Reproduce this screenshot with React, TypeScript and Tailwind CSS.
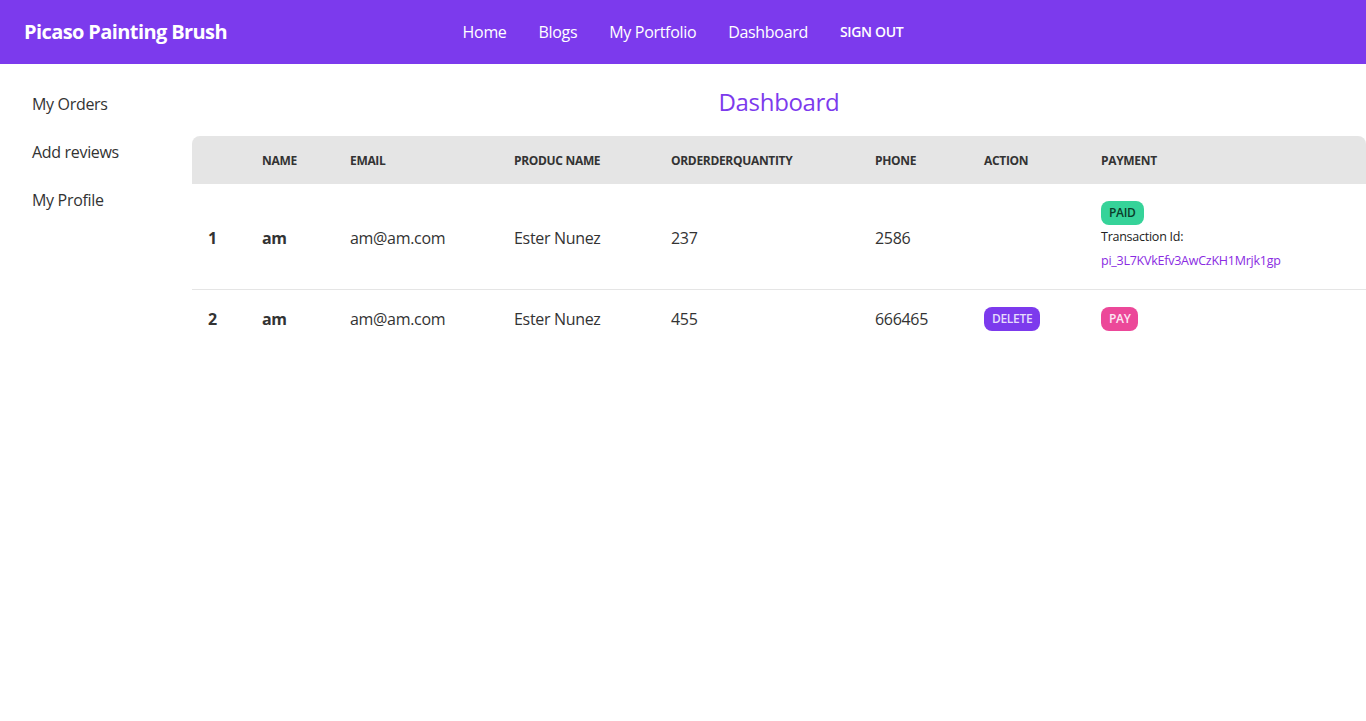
const font = { fontFamily: '"Open Sans", "Noto Sans", sans-serif' };

type Order = {
  id: number;
  name: string;
  email: string;
  product: string;
  quantity: string;
  phone: string;
  paid: boolean;
  transactionId?: string;
};

const orders: Order[] = [
  {
    id: 1,
    name: "am",
    email: "am@am.com",
    product: "Ester Nunez",
    quantity: "237",
    phone: "2586",
    paid: true,
    transactionId: "pi_3L7KVkEfv3AwCzKH1Mrjk1gp",
  },
  {
    id: 2,
    name: "am",
    email: "am@am.com",
    product: "Ester Nunez",
    quantity: "455",
    phone: "666465",
    paid: false,
  },
];

function Navbar() {
  return (
    <header className="flex h-16 items-center bg-[#7c3aed] px-2 text-white">
      <div className="flex-1">
        <a className="px-4 text-xl font-bold tracking-[-0.03em]">Picaso Painting Brush</a>
      </div>
      <nav className="flex items-center text-base">
        <a className="px-4">Home</a>
        <a className="px-4">Blogs</a>
        <a className="px-4">My Portfolio</a>
        <a className="px-4">Dashboard</a>
        <button className="px-4 text-sm font-semibold uppercase">Sign out</button>
      </nav>
      <div className="flex-1" />
    </header>
  );
}

function Sidebar() {
  return (
    <aside className="w-48 shrink-0 p-4">
      <ul className="flex flex-col text-base text-[#333]">
        <li className="px-4 py-3 leading-6">My Orders</li>
        <li className="px-4 py-3 leading-6">Add reviews</li>
        <li className="px-4 py-3 leading-6">My Profile</li>
      </ul>
    </aside>
  );
}

function OrdersTable() {
  const th = "px-4 pt-[17px] pb-[15px] text-left text-xs font-bold uppercase leading-4 text-[#333]";
  const td = "px-4 pt-[17px] pb-[15px] text-base leading-6 text-[#333]";
  return (
    <table className="w-full table-fixed border-collapse">
      <thead>
        <tr className="bg-[#e5e5e5]">
          <th className={`${th} w-[54px] rounded-tl-lg`}></th>
          <th className={`${th} w-[88px]`}>Name</th>
          <th className={`${th} w-[164px]`}>Email</th>
          <th className={`${th} w-[157px]`}>Produc Name</th>
          <th className={`${th} w-[204px]`}>OrderderQuantity</th>
          <th className={`${th} w-[109px]`}>Phone</th>
          <th className={`${th} w-[117px]`}>Action</th>
          <th className={`${th} rounded-tr-lg`}>Payment</th>
        </tr>
      </thead>
      <tbody>
        {orders.map((o, i) => (
          <tr key={o.id} className={i < orders.length - 1 ? "border-b border-[#e5e5e5]" : ""}>
            <td className={`${td} font-bold`}>{o.id}</td>
            <td className={`${td} font-bold`}>{o.name}</td>
            <td className={td}>{o.email}</td>
            <td className={td}>{o.product}</td>
            <td className={td}>{o.quantity}</td>
            <td className={td}>{o.phone}</td>
            <td className={td}>
              {!o.paid && (
                <button className="flex h-6 items-center rounded-lg bg-[#7c3aed] px-2 text-xs font-semibold uppercase text-[#e6dcfc]">
                  Delete
                </button>
              )}
            </td>
            <td className={td}>
              {o.paid ? (
                <div className="pb-[1px]">
                  <button className="flex h-6 items-center rounded-lg bg-[#36d399] px-2 text-xs font-semibold uppercase text-[#0b3d2a]">
                    Paid
                  </button>
                  <p className="text-[12.5px] leading-6 tracking-[-0.02em] text-[#222]">Transaction Id:</p>
                  <p className="text-[12.5px] leading-6 tracking-[-0.02em] text-[#8a2be2]">{o.transactionId}</p>
                </div>
              ) : (
                <button className="flex h-6 items-center rounded-lg bg-[#ec4899] px-2 text-xs font-semibold uppercase text-[#fce7f3]">
                  Pay
                </button>
              )}
            </td>
          </tr>
        ))}
      </tbody>
    </table>
  );
}

export default function App() {
  return (
    <div className="min-h-screen bg-white tracking-[-0.02em]" style={font}>
      <Navbar />
      <div className="flex">
        <Sidebar />
        <main className="flex-1">
          <h2 className="pt-[22px] pb-[18px] text-center text-2xl leading-8 text-[#7c3aed]">Dashboard</h2>
          <OrdersTable />
        </main>
      </div>
    </div>
  );
}
